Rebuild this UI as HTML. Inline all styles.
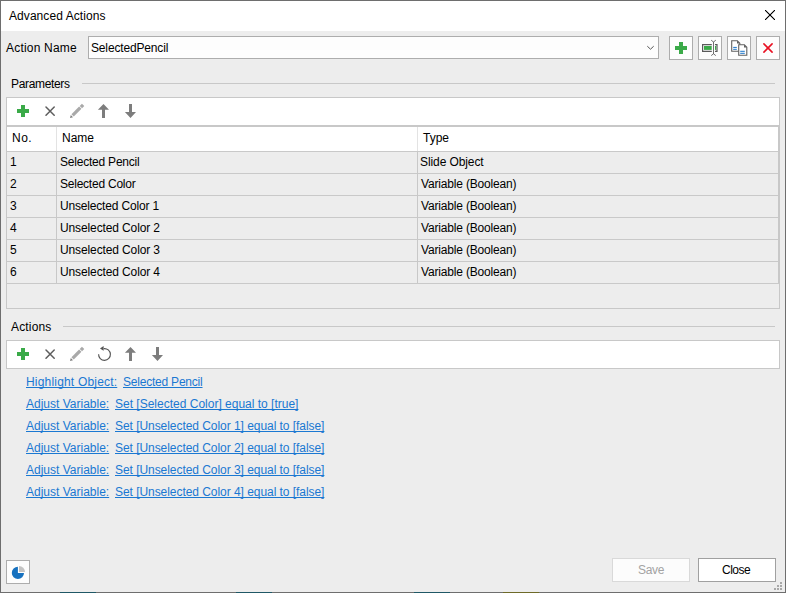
<!DOCTYPE html>
<html><head><meta charset="utf-8">
<style>
*{margin:0;padding:0;box-sizing:border-box}
html,body{width:786px;height:593px;overflow:hidden;background:#ededed}
body{position:relative;font-family:"Liberation Sans",sans-serif;font-size:12px;color:#000}
.a{position:absolute}
.t{position:absolute;white-space:nowrap;line-height:14px;height:14px}
#win{position:absolute;left:0;top:0;width:786px;height:593px;border:1px solid #6e6e6e;background:#ededed}
#title{position:absolute;left:1px;top:1px;width:784px;height:30px;background:#fff}
.box{position:absolute;border:1px solid #adadad;background:#fdfdfd}
.tb{position:absolute;left:6px;width:774px;height:29px;border:1px solid #c8c8c8;background:#fff}
.hl{position:absolute;height:1px;background:#c8c8c8}
.vl{position:absolute;width:1px;background:#c8c8c8}
.lnk{color:#1a78d2;text-decoration:underline;text-decoration-skip-ink:none}
.rl{position:absolute;left:7px;width:772px;height:1px;background:#c9c9c9}
</style></head><body>
<div id="win"></div>
<div id="title"></div>
<div class="a" style="left:60px;top:592px;width:36px;height:1px;background:#1f5866"></div>
<div class="a" style="left:236px;top:592px;width:36px;height:1px;background:#1f5866"></div>
<div class="a" style="left:414px;top:592px;width:36px;height:1px;background:#1f5866"></div>
<div class="a" style="left:503px;top:592px;width:36px;height:1px;background:#6e6a28"></div>

<svg class="a" style="left:765px;top:10px" width="10" height="10" viewBox="0 0 10 10"><g fill="#000" fill-opacity="0.28"><rect x="1" y="0" width="1" height="1"/><rect x="0" y="1" width="1" height="1"/><rect x="8" y="0" width="1" height="1"/><rect x="9" y="1" width="1" height="1"/><rect x="2" y="1" width="1" height="1"/><rect x="1" y="2" width="1" height="1"/><rect x="7" y="1" width="1" height="1"/><rect x="8" y="2" width="1" height="1"/><rect x="3" y="2" width="1" height="1"/><rect x="2" y="3" width="1" height="1"/><rect x="6" y="2" width="1" height="1"/><rect x="7" y="3" width="1" height="1"/><rect x="4" y="3" width="1" height="1"/><rect x="3" y="4" width="1" height="1"/><rect x="5" y="3" width="1" height="1"/><rect x="6" y="4" width="1" height="1"/><rect x="5" y="4" width="1" height="1"/><rect x="4" y="5" width="1" height="1"/><rect x="4" y="4" width="1" height="1"/><rect x="5" y="5" width="1" height="1"/><rect x="6" y="5" width="1" height="1"/><rect x="5" y="6" width="1" height="1"/><rect x="3" y="5" width="1" height="1"/><rect x="4" y="6" width="1" height="1"/><rect x="7" y="6" width="1" height="1"/><rect x="6" y="7" width="1" height="1"/><rect x="2" y="6" width="1" height="1"/><rect x="3" y="7" width="1" height="1"/><rect x="8" y="7" width="1" height="1"/><rect x="7" y="8" width="1" height="1"/><rect x="1" y="7" width="1" height="1"/><rect x="2" y="8" width="1" height="1"/><rect x="9" y="8" width="1" height="1"/><rect x="8" y="9" width="1" height="1"/><rect x="0" y="8" width="1" height="1"/><rect x="1" y="9" width="1" height="1"/></g><g fill="#000"><rect x="0" y="0" width="1" height="1"/><rect x="9" y="0" width="1" height="1"/><rect x="1" y="1" width="1" height="1"/><rect x="8" y="1" width="1" height="1"/><rect x="2" y="2" width="1" height="1"/><rect x="7" y="2" width="1" height="1"/><rect x="3" y="3" width="1" height="1"/><rect x="6" y="3" width="1" height="1"/><rect x="4" y="4" width="1" height="1"/><rect x="5" y="4" width="1" height="1"/><rect x="5" y="5" width="1" height="1"/><rect x="4" y="5" width="1" height="1"/><rect x="6" y="6" width="1" height="1"/><rect x="3" y="6" width="1" height="1"/><rect x="7" y="7" width="1" height="1"/><rect x="2" y="7" width="1" height="1"/><rect x="8" y="8" width="1" height="1"/><rect x="1" y="8" width="1" height="1"/><rect x="9" y="9" width="1" height="1"/><rect x="0" y="9" width="1" height="1"/></g></svg>

<div class="box" style="left:88px;top:36px;width:571px;height:23px"></div>
<svg class="a" style="left:646px;top:44px" width="10" height="7" viewBox="0 0 10 7"><path d="M1.3 2.2L4.5 5.2L7.7 2.2" stroke="#555" stroke-width="1" fill="none"/></svg>

<div class="box" style="left:669px;top:36px;width:24px;height:24px"></div>
<div class="box" style="left:698px;top:36px;width:24px;height:24px"></div>
<div class="box" style="left:727px;top:36px;width:24px;height:24px"></div>
<div class="box" style="left:756px;top:36px;width:24px;height:24px"></div>
<div class="a" style="left:675px;top:46px;width:12px;height:4px;background:#3aaa48"></div>
<div class="a" style="left:679px;top:42px;width:4px;height:12px;background:#3aaa48"></div>


<svg class="a" style="left:697px;top:35px" width="26" height="26" viewBox="0 0 26 26"><g stroke="#5a5a5a" stroke-width="1.2" fill="none"><path d="M14.8 9.6H5.6V16.4H14.8"/><path d="M18 9.6H20V16.4H18"/></g><rect x="7" y="11" width="7.7" height="3.9" fill="#3aaa48"/><rect x="18" y="11" width="1.1" height="3.9" fill="#3aaa48"/><g stroke="#606060" stroke-width="0.9" fill="none"><path d="M16.5 6.8V19"/><path d="M14.2 5.2L16.5 7L18.8 5.2"/><path d="M14.2 20.6L16.5 18.8L18.8 20.6"/></g></svg>
<svg class="a" style="left:726px;top:35px" width="26" height="26" viewBox="0 0 26 26"><path d="M5.7 5.7H11.3L13.8 8.2V16.2H5.7Z" stroke="#606060" stroke-width="1.1" fill="#fff"/><path d="M11 5.5V8.5H14Z" fill="#606060"/><path d="M12.7 9.7H18.3L20.8 12.2V20.2H12.7Z" stroke="#606060" stroke-width="1.1" fill="#fff"/><path d="M18 9.5V12.5H21Z" fill="#606060"/><path d="M7.2 12.4H10.8M7.2 14.3H10.8M14.2 16.3H18.8M14.2 18.3H18.8" stroke="#1a73c8" stroke-width="1"/></svg>
<svg class="a" style="left:755px;top:35px" width="26" height="26" viewBox="0 0 26 26"><g stroke="#e81123" stroke-width="1.6" stroke-linecap="round"><path d="M8.9 8.9L17.1 17.1"/><path d="M17.1 8.9L8.9 17.1"/></g></svg>
<div class="hl" style="left:82px;top:83px;width:693px"></div>

<div class="tb" style="top:97px"></div>
<div class="a" style="left:17px;top:109px;width:12px;height:4px;background:#3aaa48"></div>
<div class="a" style="left:21px;top:105px;width:4px;height:12px;background:#3aaa48"></div>
<svg class="a" style="left:45px;top:106px" width="10" height="10" viewBox="0 0 10 10"><g stroke="#5e5e5e" stroke-width="1.5" stroke-linecap="round"><path d="M1 1L9.2 9.2"/><path d="M9.2 1L1 9.2"/></g></svg>

<svg class="a" style="left:67px;top:101px" width="20" height="20" viewBox="0 0 20 20"><path d="M5.6 14.4L13.3 6.7" stroke="#a9a9a9" stroke-width="3.3"/><path d="M13.9 6.1L16.1 3.9" stroke="#a9a9a9" stroke-width="3.3"/><path d="M3 17L3.8 14L6 16.2Z" fill="#7d7d7d"/></svg><svg class="a" style="left:93px;top:101px" width="20" height="20" viewBox="0 0 20 20"><path d="M10.5 2.9L16 8.8L12 8.8L12 17L9 17L9 8.8L4.9 8.8Z" fill="#7d7d7d"/></svg><svg class="a" style="left:120px;top:101px" width="20" height="20" viewBox="0 0 20 20"><path d="M9 2.9L12 2.9L12 11.1L16 11.1L10.5 17L4.9 11.1L9 11.1Z" fill="#7d7d7d"/></svg>
<!-- table -->
<div class="a" style="left:6px;top:126px;width:774px;height:183px;border:1px solid #c8c8c8;background:#ededed"></div>
<div class="a" style="left:7px;top:127px;width:771px;height:24px;background:#fff"></div>
<div class="rl" style="top:151px"></div>
<div class="rl" style="top:173px"></div>
<div class="rl" style="top:195px"></div>
<div class="rl" style="top:217px"></div>
<div class="rl" style="top:239px"></div>
<div class="rl" style="top:261px"></div>
<div class="rl" style="top:283px"></div>
<div class="vl" style="left:56px;top:127px;height:24px;background:#e3e3e3"></div>
<div class="vl" style="left:417px;top:127px;height:24px;background:#e3e3e3"></div>
<div class="vl" style="left:56px;top:152px;height:131px"></div>
<div class="vl" style="left:417px;top:152px;height:131px"></div>
<div class="vl" style="left:778px;top:127px;height:156px"></div>


<div class="hl" style="left:63px;top:326px;width:712px"></div>

<div class="tb" style="top:340px"></div>
<div class="a" style="left:17px;top:352px;width:12px;height:4px;background:#3aaa48"></div>
<div class="a" style="left:21px;top:348px;width:4px;height:12px;background:#3aaa48"></div>
<svg class="a" style="left:45px;top:349px" width="10" height="10" viewBox="0 0 10 10"><g stroke="#5e5e5e" stroke-width="1.5" stroke-linecap="round"><path d="M1 1L9.2 9.2"/><path d="M9.2 1L1 9.2"/></g></svg>

<svg class="a" style="left:67px;top:344px" width="20" height="20" viewBox="0 0 20 20"><path d="M5.6 14.4L13.3 6.7" stroke="#a9a9a9" stroke-width="3.3"/><path d="M13.9 6.1L16.1 3.9" stroke="#a9a9a9" stroke-width="3.3"/><path d="M3 17L3.8 14L6 16.2Z" fill="#7d7d7d"/></svg><svg class="a" style="left:94px;top:344px" width="20" height="20" viewBox="0 0 20 20"><path d="M4.6 10.2A5.9 5.9 0 1 0 9.8 4.6" stroke="#555" stroke-width="1.15" fill="none"/><path d="M6 4.4L9.6 2.1L9.6 6.8Z" fill="#555"/></svg><svg class="a" style="left:120px;top:344px" width="20" height="20" viewBox="0 0 20 20"><path d="M10.5 2.9L16 8.8L12 8.8L12 17L9 17L9 8.8L4.9 8.8Z" fill="#7d7d7d"/></svg><svg class="a" style="left:147px;top:344px" width="20" height="20" viewBox="0 0 20 20"><path d="M9 2.9L12 2.9L12 11.1L16 11.1L10.5 17L4.9 11.1L9 11.1Z" fill="#7d7d7d"/></svg>

<div class="box" style="left:6px;top:560px;width:24px;height:24px"></div>

<svg class="a" style="left:4px;top:556px" width="28" height="30" viewBox="0 0 28 30"><path d="M13.9 10.8A6.1 6.1 0 1 0 20 16.9H13.9Z" fill="#1671bf"/><path d="M15 10A6 6 0 0 1 21 16H15Z" fill="#c3c3c3"/></svg>
<svg class="a" style="left:770px;top:578px" width="16" height="15" viewBox="0 0 16 15" fill="#a8a8a8"><rect x="10" y="4" width="2" height="2"/><rect x="7" y="7" width="2" height="2"/><rect x="10" y="7" width="2" height="2"/><rect x="4" y="10" width="2" height="2"/><rect x="7" y="10" width="2" height="2"/><rect x="10" y="10" width="2" height="2"/></svg>
<div class="a" style="left:612px;top:558px;width:78px;height:24px;border:1px solid #d9d9d9;background:#fcfcfc"></div>
<div class="a" style="left:698px;top:558px;width:78px;height:24px;border:1px solid #a0a0a0;background:#fff"></div>
<div class="t" style="left:9px;top:9px;letter-spacing:0.067px">Advanced Actions</div>
<div class="t" style="left:6px;top:41px;letter-spacing:0.2px">Action Name</div>
<div class="t" style="left:91px;top:41px;letter-spacing:-0.154px">SelectedPencil</div>
<div class="t" style="left:11px;top:77px;letter-spacing:-0.333px">Parameters</div>
<div class="t" style="left:12px;top:131px;letter-spacing:0.5px">No.</div>
<div class="t" style="left:62px;top:131px">Name</div>
<div class="t" style="left:423px;top:131px">Type</div>
<div class="t" style="left:10px;top:155px">1</div>
<div class="t" style="left:60px;top:155px;letter-spacing:-0.214px">Selected Pencil</div>
<div class="t" style="left:420px;top:155px;letter-spacing:-0.091px">Slide Object</div>
<div class="t" style="left:10px;top:177px">2</div>
<div class="t" style="left:60px;top:177px;letter-spacing:-0.231px">Selected Color</div>
<div class="t" style="left:421px;top:177px;letter-spacing:-0.176px">Variable (Boolean)</div>
<div class="t" style="left:10px;top:199px">3</div>
<div class="t" style="left:60px;top:199px;letter-spacing:-0.176px">Unselected Color 1</div>
<div class="t" style="left:421px;top:199px;letter-spacing:-0.176px">Variable (Boolean)</div>
<div class="t" style="left:10px;top:221px">4</div>
<div class="t" style="left:60px;top:221px;letter-spacing:-0.118px">Unselected Color 2</div>
<div class="t" style="left:421px;top:221px;letter-spacing:-0.176px">Variable (Boolean)</div>
<div class="t" style="left:10px;top:243px">5</div>
<div class="t" style="left:60px;top:243px;letter-spacing:-0.118px">Unselected Color 3</div>
<div class="t" style="left:421px;top:243px;letter-spacing:-0.176px">Variable (Boolean)</div>
<div class="t" style="left:10px;top:265px">6</div>
<div class="t" style="left:60px;top:265px;letter-spacing:-0.118px">Unselected Color 4</div>
<div class="t" style="left:421px;top:265px;letter-spacing:-0.176px">Variable (Boolean)</div>
<div class="t" style="left:11px;top:320px;letter-spacing:0.167px">Actions</div>
<div class="t lnk" style="left:26px;top:375px;letter-spacing:0.188px">Highlight Object:</div>
<div class="t lnk" style="left:123px;top:375px;letter-spacing:-0.214px">Selected Pencil</div>
<div class="t lnk" style="left:26px;top:397px">Adjust Variable:</div>
<div class="t lnk" style="left:115px;top:397px">Set [Selected Color] equal to [true]</div>
<div class="t lnk" style="left:26px;top:419px">Adjust Variable:</div>
<div class="t lnk" style="left:115px;top:419px;letter-spacing:-0.05px">Set [Unselected Color 1] equal to [false]</div>
<div class="t lnk" style="left:26px;top:441px">Adjust Variable:</div>
<div class="t lnk" style="left:115px;top:441px;letter-spacing:-0.05px">Set [Unselected Color 2] equal to [false]</div>
<div class="t lnk" style="left:26px;top:463px">Adjust Variable:</div>
<div class="t lnk" style="left:115px;top:463px;letter-spacing:-0.05px">Set [Unselected Color 3] equal to [false]</div>
<div class="t lnk" style="left:26px;top:485px">Adjust Variable:</div>
<div class="t lnk" style="left:115px;top:485px;letter-spacing:-0.05px">Set [Unselected Color 4] equal to [false]</div>
<div class="t" style="left:638px;top:563px;letter-spacing:-0.333px;color:#a3a3a3">Save</div>
<div class="t" style="left:722px;top:563px;letter-spacing:-0.5px">Close</div>
</body></html>
